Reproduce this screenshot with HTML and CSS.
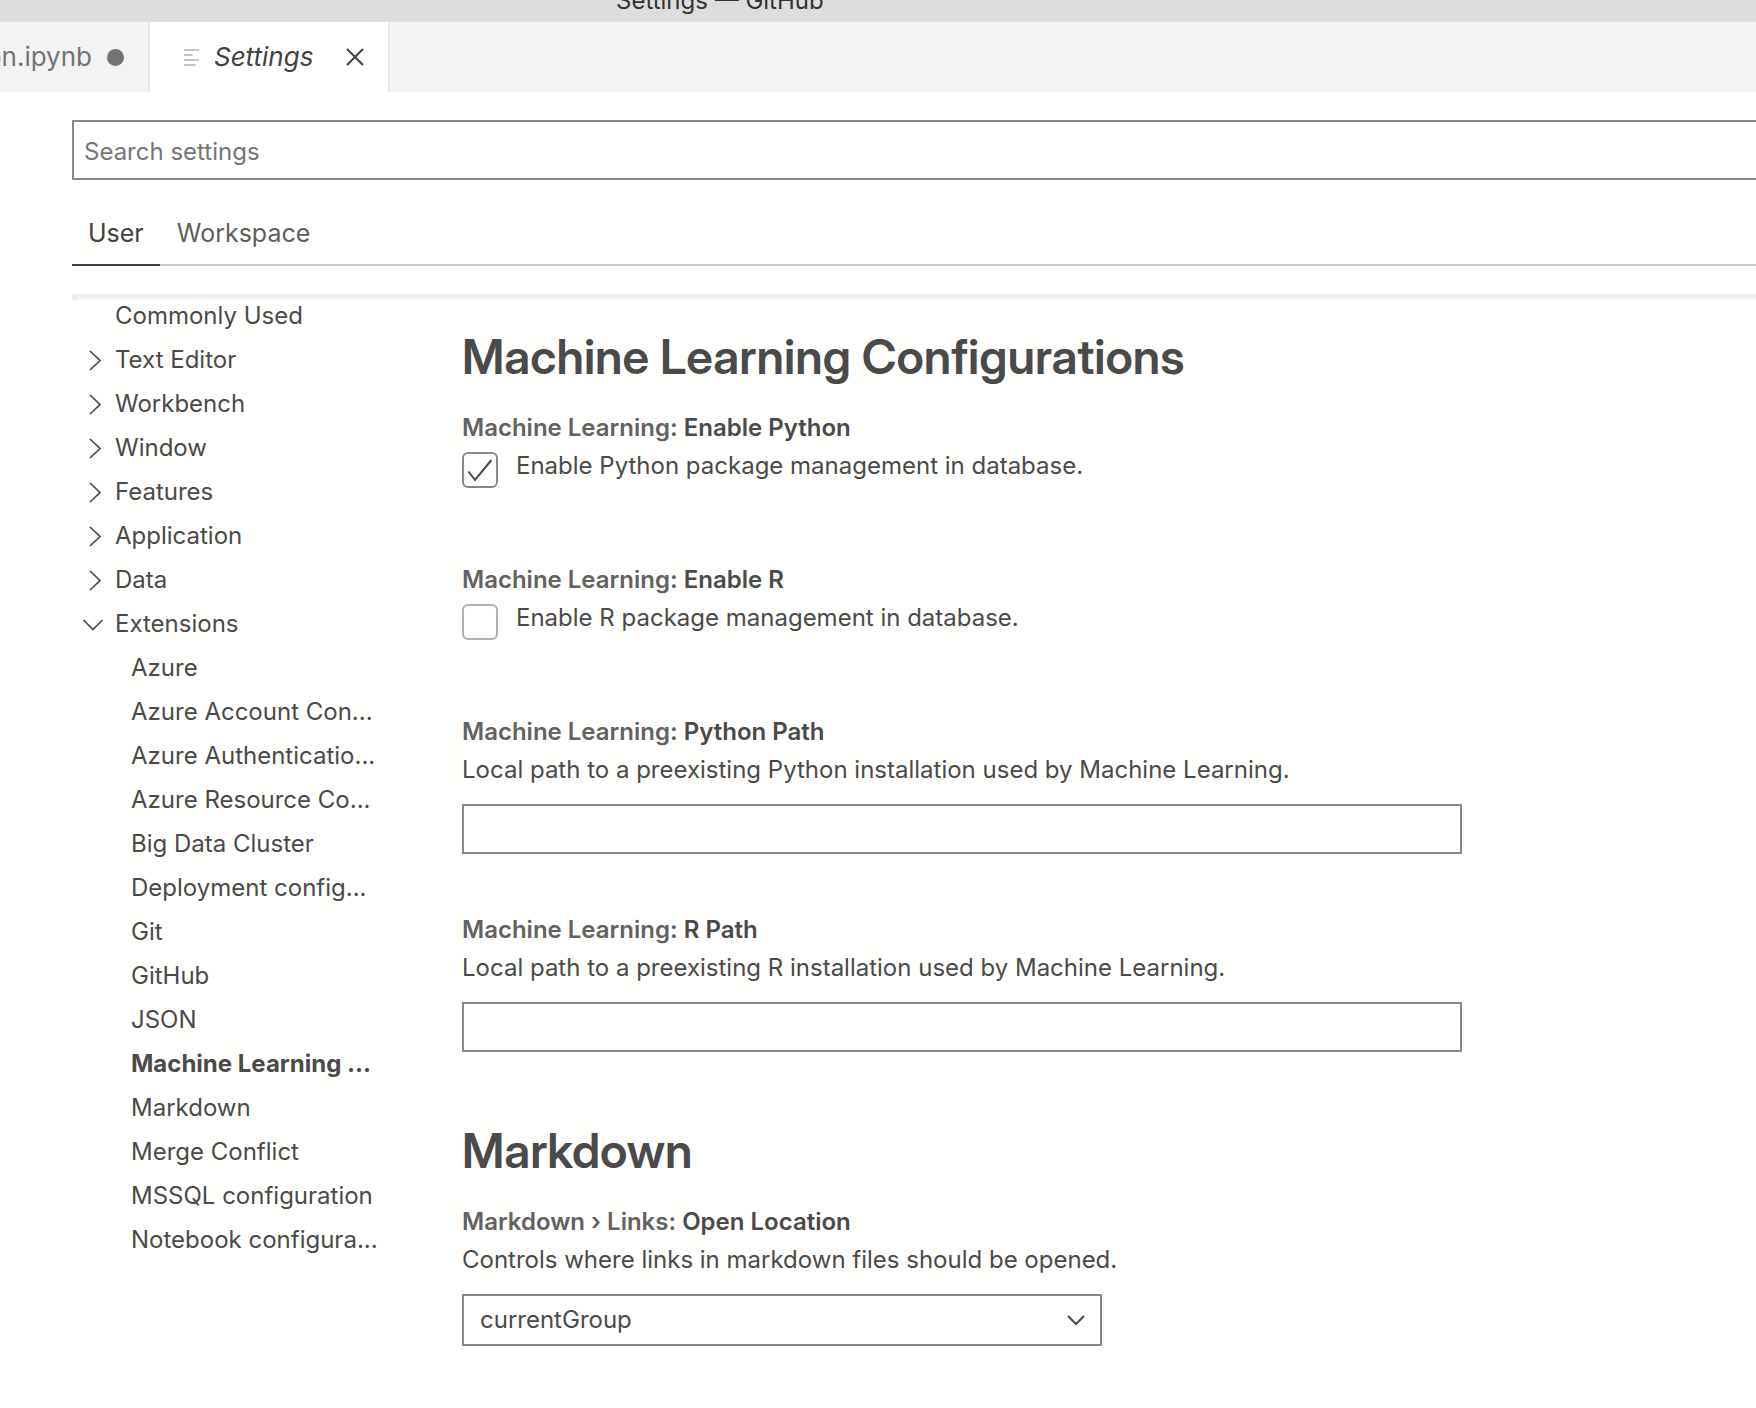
FILE: index.html
```html
<!DOCTYPE html>
<html lang="en">
<head>
<meta charset="utf-8">
<meta name="viewport" content="width=device-width, initial-scale=1">
<title>Settings — GitHub</title>
<link rel="stylesheet" href="styles.css">
</head>
<body>
<svg class="sprite" aria-hidden="true">
  <symbol id="chevron-right" viewBox="0 0 24 24"><path d="M9 3l10 9.500l-10 9.500" fill="none" stroke="currentColor" stroke-width="1.700"/></symbol>
  <symbol id="chevron-down" viewBox="0 0 24 24"><path d="M2.500 8l9.500 9.500l9.500-9.500" fill="none" stroke="currentColor" stroke-width="1.700"/></symbol>
</svg>
<header class="titlebar"><span class="window-title">Settings — GitHub</span></header>
<div class="editor-tabs" role="tablist">
  <div class="editor-tab" role="tab" aria-selected="false">
    <span>on.ipynb</span>
    <span class="dirty-dot"></span>
  </div>
  <div class="editor-tab editor-tab-active" role="tab" aria-selected="true">
    <svg class="file-icon" viewBox="0 0 16 17" aria-hidden="true"><path d="M0 1h15M0 6h8.500M0 11h15M0 16h11.500" stroke="currentColor" stroke-width="1.800"/></svg>
    <span class="tab-name">Settings</span>
    <button class="tab-close" type="button" aria-label="Close">
      <svg viewBox="0 0 18 18" aria-hidden="true"><path d="M1 1l16 16M17 1l-16 16" stroke="currentColor" stroke-width="2"/></svg>
    </button>
  </div>
</div>
<main class="settings">
  <input class="search" type="text" placeholder="Search settings" aria-label="Search settings">
  <div class="scopes">
    <button class="scope scope-active" type="button">User</button>
    <button class="scope" type="button">Workspace</button>
  </div>
  <div class="body">
    <nav class="toc" aria-label="Settings groups">
      <a class="toc-row" href="#">Commonly Used</a>
      <a class="toc-row" href="#"><svg class="twistie"><use href="#chevron-right"/></svg>Text Editor</a>
      <a class="toc-row" href="#"><svg class="twistie"><use href="#chevron-right"/></svg>Workbench</a>
      <a class="toc-row" href="#"><svg class="twistie"><use href="#chevron-right"/></svg>Window</a>
      <a class="toc-row" href="#"><svg class="twistie"><use href="#chevron-right"/></svg>Features</a>
      <a class="toc-row" href="#"><svg class="twistie"><use href="#chevron-right"/></svg>Application</a>
      <a class="toc-row" href="#"><svg class="twistie"><use href="#chevron-right"/></svg>Data</a>
      <a class="toc-row" href="#"><svg class="twistie"><use href="#chevron-down"/></svg>Extensions</a>
      <a class="toc-row toc-child" href="#">Azure</a>
      <a class="toc-row toc-child" href="#">Azure Account Con...</a>
      <a class="toc-row toc-child" href="#">Azure Authenticatio...</a>
      <a class="toc-row toc-child" href="#">Azure Resource Co...</a>
      <a class="toc-row toc-child" href="#">Big Data Cluster</a>
      <a class="toc-row toc-child" href="#">Deployment config...</a>
      <a class="toc-row toc-child" href="#">Git</a>
      <a class="toc-row toc-child" href="#">GitHub</a>
      <a class="toc-row toc-child" href="#">JSON</a>
      <a class="toc-row toc-child toc-current" href="#">Machine Learning ...</a>
      <a class="toc-row toc-child" href="#">Markdown</a>
      <a class="toc-row toc-child" href="#">Merge Conflict</a>
      <a class="toc-row toc-child" href="#">MSSQL configuration</a>
      <a class="toc-row toc-child" href="#">Notebook configura...</a>
    </nav>
    <div class="groups">
      <section class="group">
        <h2 class="group-title">Machine Learning Configurations</h2>
        <div class="setting">
          <h3 class="setting-title"><span class="category">Machine Learning: </span>Enable Python</h3>
          <div class="check-row">
            <span class="check">
              <input class="check-box" type="checkbox" id="enable-python" checked>
              <svg class="check-mark" viewBox="0 0 32 32" aria-hidden="true"><path d="M4.500 17.500l6.500 8.500L27.500 6" fill="none" stroke="currentColor" stroke-width="2"/></svg>
            </span>
            <label class="description" for="enable-python">Enable Python package management in database.</label>
          </div>
        </div>
        <div class="setting">
          <h3 class="setting-title"><span class="category">Machine Learning: </span>Enable R</h3>
          <div class="check-row">
            <span class="check">
              <input class="check-box" type="checkbox" id="enable-r">
            </span>
            <label class="description" for="enable-r">Enable R package management in database.</label>
          </div>
        </div>
        <div class="setting">
          <h3 class="setting-title"><span class="category">Machine Learning: </span>Python Path</h3>
          <label class="description" for="python-path">Local path to a preexisting Python installation used by Machine Learning.</label>
          <input class="text-field" type="text" id="python-path">
        </div>
        <div class="setting">
          <h3 class="setting-title"><span class="category">Machine Learning: </span>R Path</h3>
          <label class="description" for="r-path">Local path to a preexisting R installation used by Machine Learning.</label>
          <input class="text-field" type="text" id="r-path">
        </div>
      </section>
      <section class="group">
        <h2 class="group-title">Markdown</h2>
        <div class="setting">
          <h3 class="setting-title"><span class="category">Markdown › Links: </span>Open Location</h3>
          <label class="description" for="open-location">Controls where links in markdown files should be opened.</label>
          <div class="select-wrap">
            <select class="select" id="open-location"><option>currentGroup</option><option>beside</option></select>
            <svg class="select-arrow" viewBox="0 0 22 22" aria-hidden="true"><path d="M3 7l8 8l8-8" fill="none" stroke="currentColor" stroke-width="2"/></svg>
          </div>
        </div>
      </section>
    </div>
  </div>
</main>
</body>
</html>
```
FILE: styles.css
```css
* { box-sizing: border-box; }

body {
  margin: 0;
  background: #fffffd;
  color: #4a4a4a;
  font: 24px/38px Inter, "Liberation Sans", sans-serif;
}

button, input, select { font: inherit; color: inherit; margin: 0; border-radius: 0; }

.sprite { display: none; }

/* Window title, partly scrolled off the top edge */
.titlebar {
  display: flex;
  align-items: flex-end;
  height: 22px;
  padding: 0 0 3px 616px;
  overflow: hidden;
  background: #ddd;
  color: #333;
}
.window-title { line-height: 36px; white-space: nowrap; }

.editor-tabs { display: flex; height: 70px; background: #f3f3f3; font-size: 26px; }
.editor-tab {
  display: flex;
  align-items: center;
  border-right: 2px solid #e7e7e7;
  color: #737373;
}
.editor-tab:first-child { width: 150px; justify-content: flex-end; gap: 15px; padding-right: 24px; white-space: nowrap; overflow: hidden; }
.dirty-dot { flex: none; width: 17px; height: 17px; border-radius: 50%; background: #737373; }
.editor-tab-active { width: 240px; padding: 0 24px 0 34px; background: #fff; color: #424242; }
.file-icon { width: 16px; height: 17px; margin-right: 14px; color: #c4c4c4; }
.tab-name { font-style: italic; }
.tab-close { display: flex; margin-left: auto; padding: 0; border: 0; background: none; }
.tab-close svg { width: 18px; height: 18px; }

.settings { padding: 28px 0 0 72px; }
.search {
  display: block;
  width: 100%;
  height: 60px;
  padding: 2px 10px 0;
  border: 2px solid #888;
  border-right: 0;
  background: #fff;
}
.search::placeholder { color: #767676; opacity: 1; }

.scopes {
  display: flex;
  gap: 1px;
  height: 86px;
  padding-top: 20px;
  box-shadow: inset 0 -2px #c8c8c8;
}
.scope { padding: 0 16px; border: 0; background: none; font-size: 25px; color: #5f5f5f; }
.scope-active { color: #424242; box-shadow: inset 0 -2px #424242; }

.body { position: relative; display: flex; gap: 70px; margin-top: 28px; }
.body::before {
  content: "";
  position: absolute;
  inset: 0 0 auto;
  height: 6px;
  border-left: 6px solid #ececec;
  background: linear-gradient(#ececec, #f9f9f9);
}

.toc { flex: none; display: flex; flex-direction: column; width: 320px; }
.toc-row {
  display: flex;
  align-items: center;
  height: 44px;
  padding-left: 43px;
  color: inherit;
  text-decoration: none;
  white-space: nowrap;
}
.toc-child { padding-left: 59px; }
.toc-current { font-weight: 700; }
.twistie { flex: none; width: 24px; height: 24px; margin: 0 10px 0 -34px; }

.groups { flex: 1; max-width: 1000px; padding-top: 21px; }
.group { padding-top: 11px; }
.group-title { margin: 0 0 22px; font-family: "Inter Display", Inter, "Liberation Sans", sans-serif; font-size: 48px; line-height: 61px; font-weight: 600; }
.setting { display: flex; flex-direction: column; padding-bottom: 57px; }
.setting-title { margin: 0; font-size: 24px; line-height: 38px; font-weight: 600; }
.category { color: #626262; }

.check-row { display: flex; gap: 18px; padding-bottom: 16px; }
.check { display: grid; margin-top: 5px; }
.check-box {
  grid-area: 1 / 1;
  appearance: none;
  width: 36px;
  height: 36px;
  border: 2px solid #b0b0b0;
  border-radius: 6px;
  background: #fff;
}
.check-box:checked { border-color: #888; }
.check-mark { grid-area: 1 / 1; place-self: center; width: 32px; height: 32px; pointer-events: none; }

.text-field { width: 100%; height: 50px; margin-top: 15px; padding: 0 10px; border: 2px solid #888; background: #fff; }

.select-wrap { position: relative; width: 640px; max-width: 100%; margin-top: 15px; }
.select { display: block; appearance: none; width: 100%; height: 52px; padding: 0 16px; border: 2px solid #888; background: #fff; }
.select-arrow { position: absolute; top: 15px; right: 15px; width: 22px; height: 22px; pointer-events: none; }
```
